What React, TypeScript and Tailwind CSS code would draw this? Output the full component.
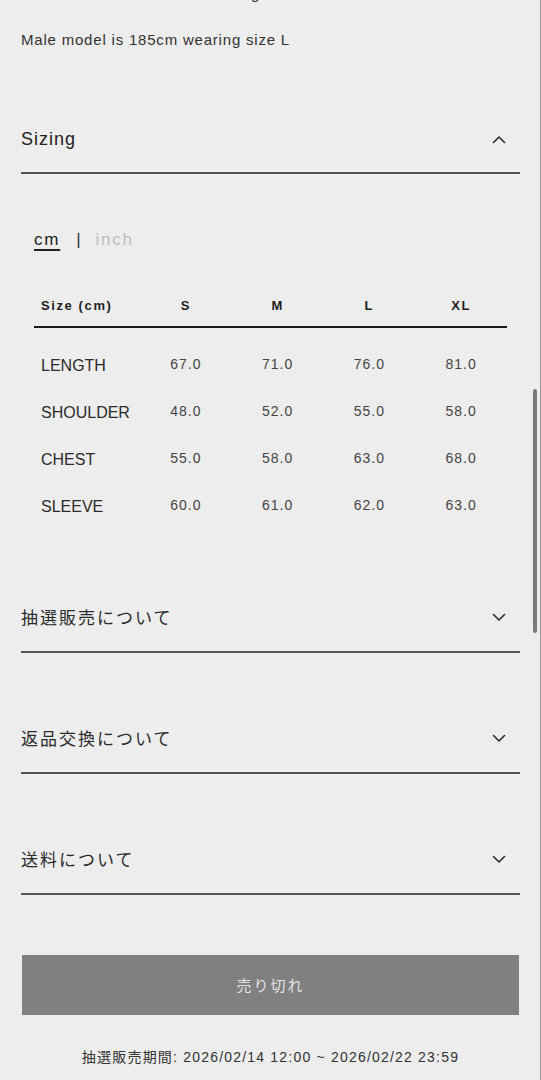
const sizes = ['S', 'M', 'L', 'XL']

const rows = [
  { label: 'LENGTH', values: ['67.0', '71.0', '76.0', '81.0'] },
  { label: 'SHOULDER', values: ['48.0', '52.0', '55.0', '58.0'] },
  { label: 'CHEST', values: ['55.0', '58.0', '63.0', '68.0'] },
  { label: 'SLEEVE', values: ['60.0', '61.0', '62.0', '63.0'] },
]

const sections = ['抽選販売について', '返品交換について', '送料について']

const Chevron = ({ up = false }: { up?: boolean }) => (
  <svg width="14" height="9" viewBox="0 0 14 9" fill="none" className="mr-[14px] shrink-0">
    <polyline
      points={up ? '1.5,7.5 7,2 12.5,7.5' : '1.5,1.5 7,7 12.5,1.5'}
      stroke="#2a2a2a"
      strokeWidth="1.6"
      strokeLinecap="round"
      strokeLinejoin="round"
    />
  </svg>
)

export default function App() {
  return (
    <div
      className="relative min-h-[1080px] w-full overflow-hidden bg-[#ededed] px-[21px] text-[#2b2b2b]"
      style={{ fontFamily: '"Liberation Sans", Arial, "Noto Sans CJK JP", sans-serif' }}
    >
      {/* previous line, mostly scrolled out */}
      <p className="-mt-[16px] whitespace-nowrap text-[15px] leading-[20px] tracking-[0.8px] text-[#333]">
        Female model is 168cm wearing
      </p>

      <p className="mt-[26px] text-[15px] leading-[20px] tracking-[0.8px] text-[#333]">
        Male model is 185cm wearing size L
      </p>

      {/* Sizing accordion (open) */}
      <div className="mt-[56px] flex h-[68px] items-center justify-between border-b-2 border-[#555]">
        <span className="text-[18px] tracking-[1px] text-[#222]">Sizing</span>
        <Chevron up />
      </div>

      <div className="mt-[54px] flex items-center pl-[13px] text-[17px] leading-[24px] tracking-[1.8px]">
        <span className="text-[#222] underline underline-offset-[4px] decoration-[1.5px]">cm</span>
        <span className="ml-[16px] text-[#333]">|</span>
        <span className="ml-[13px] text-[#bdbdbd]">inch</span>
      </div>

      <div className="mx-[13px] mt-[34px]">
        <div className="grid h-[42px] grid-cols-[106px_repeat(4,1fr)] items-center border-b-2 border-[#1a1a1a] text-[13px] font-bold tracking-[1.6px] text-[#1e1e1e]">
          <span className="pl-[7px]">Size (cm)</span>
          {sizes.map((s) => (
            <span key={s} className="text-center">
              {s}
            </span>
          ))}
        </div>
        <div className="pt-[13px]">
          {rows.map((r) => (
            <div key={r.label} className="grid h-[47px] grid-cols-[106px_repeat(4,1fr)] items-center">
              <span className="whitespace-nowrap pl-[7px] pt-[3px] text-[16px] text-[#2b2b2b]">{r.label}</span>
              {r.values.map((v, i) => (
                <span key={i} className="text-center text-[14px] tracking-[1px] text-[#444]">
                  {v}
                </span>
              ))}
            </div>
          ))}
        </div>
      </div>

      {/* Closed accordions */}
      <div className="mt-[54px] flex flex-col gap-[51px]">
        {sections.map((t) => (
          <div key={t} className="flex h-[70px] items-center justify-between border-b-2 border-[#555]">
            <span
              className="text-[17px] tracking-[2px] text-[#2b2b2b]"
              style={{ fontFamily: '"Noto Sans CJK JP", sans-serif' }}
            >
              {t}
            </span>
            <Chevron />
          </div>
        ))}
      </div>

      <button
        disabled
        className="mx-[1px] mt-[60px] flex h-[60px] w-[497px] items-center justify-center bg-[#808080] text-[15px] tracking-[2px] text-[#e2e2e2]"
        style={{ fontFamily: '"Noto Sans CJK JP", sans-serif' }}
      >
        売り切れ
      </button>

      <p className="mt-[32px] text-center text-[14px] leading-[20px] tracking-[1.2px] text-[#333]">
        抽選販売期間: 2026/02/14 12:00 ~ 2026/02/22 23:59
      </p>

      {/* scroll indicator */}
      <div className="absolute right-[4px] top-[389px] h-[244px] w-[4px] rounded-full bg-[#7a7a7a]" />
      <div className="absolute right-0 top-0 h-full w-px bg-[#9a9a9a]" />
    </div>
  )
}
